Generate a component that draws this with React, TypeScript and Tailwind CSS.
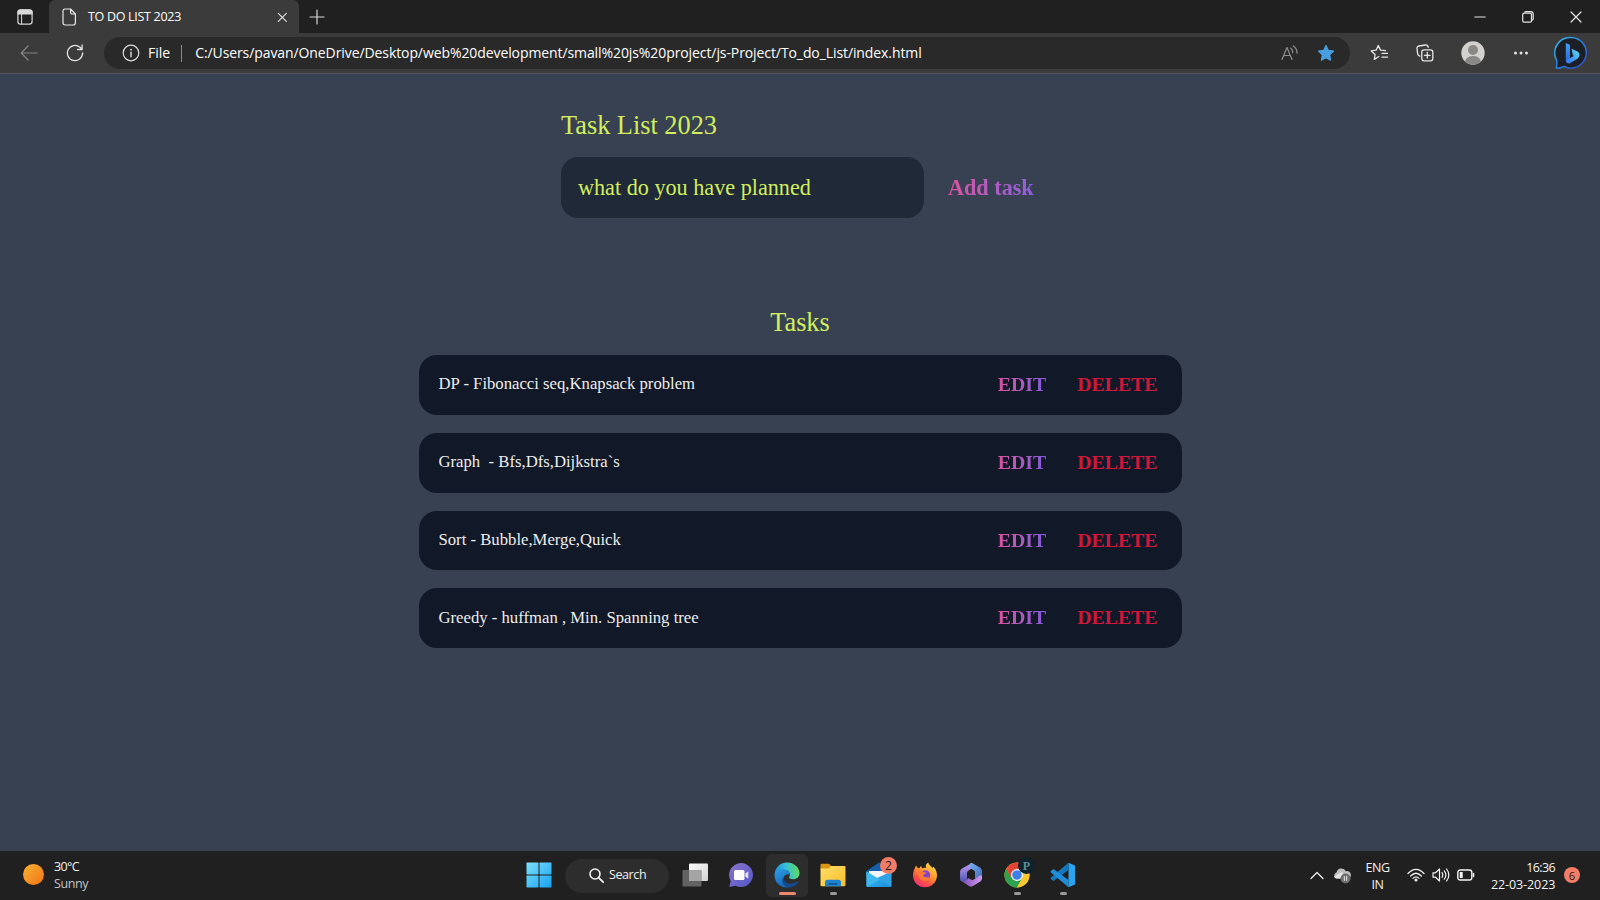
import React from "react";

const tasks = [
  "DP - Fibonacci seq,Knapsack problem",
  "Graph  - Bfs,Dfs,Dijkstra`s",
  "Sort - Bubble,Merge,Quick",
  "Greedy - huffman , Min. Spanning tree",
];

type IconProps = { className?: string; children: React.ReactNode; w: number; h: number };

function Icon({ className = "", children, w, h }: IconProps) {
  return (
    <svg
      width={w}
      height={h}
      viewBox={`0 0 ${w} ${h}`}
      fill="none"
      stroke="currentColor"
      strokeWidth="1.2"
      strokeLinecap="round"
      strokeLinejoin="round"
      className={`shrink-0 ${className}`}
    >
      {children}
    </svg>
  );
}

function TabStrip() {
  return (
    <div className="flex h-[33px] shrink-0 bg-[#202020]">
      <div className="flex w-[49px] shrink-0 items-center pl-[17px]">
        <Icon w={16} h={16} className="text-[#d8d8d8]">
          <rect x="0.9" y="0.9" width="14.2" height="14.2" rx="2.6" />
          <path d="M1 5V3.4Q1 1 3.4 1h9.2Q15 1 15 3.4V5z" fill="currentColor" />
          <path d="M4.6 5v10" strokeWidth="1" />
        </Icon>
      </div>
      <div className="flex w-[250px] shrink-0 items-center rounded-t-[6px] bg-[#3b3b3b] pl-[13px] pr-[10px] text-white">
        <Icon w={15} h={18} className="text-[#e8e8e8]">
          <path d="M3 1h5.600L13.400 6v8.800q0 2.200-2.200 2.200H3.200Q1 17 1 14.800V3.200Q1 1 3 1zM8.600 1v3.400q0 1.600 1.600 1.600h3.200" />
        </Icon>
        <span className="mt-px ml-[11px] grow text-[12.5px] leading-none tracking-[-0.3px]">TO DO LIST 2023</span>
        <Icon w={11} h={11} className="mr-px mt-px text-[#dedede]">
          <path d="M1.300 1.300l8 8M9.300 1.300l-8 8" />
        </Icon>
      </div>
      <div className="flex grow items-center pl-[10px] text-[#d8d8d8]">
        <Icon w={16} h={16}>
          <path d="M8 1v14M1 8h14" />
        </Icon>
      </div>
      <div className="flex items-center pr-[18px] text-[#e4e4e4]">
        <Icon w={12} h={12}>
          <path d="M0.800 6h10.400" strokeWidth="1.100" />
        </Icon>
        <Icon w={12} h={12} className="ml-[36px]">
          <rect x="0.700" y="2.200" width="8.800" height="9" rx="1.500" />
          <path d="M2.800 1q.4-.4 1-.4h5q2.400 0 2.400 2.400v4.700q0 .8-.6 1.300" />
        </Icon>
        <Icon w={12} h={12} className="ml-[36px]">
          <path d="M1 1l10 10M11 1L1 11" />
        </Icon>
      </div>
    </div>
  );
}

function BingLogo() {
  return (
    <Icon w={34} h={34}>
      <defs>
        <linearGradient id="bingRing" x1="0" y1="0" x2="1" y2="1">
          <stop offset="0" stopColor="#35c3e8" />
          <stop offset="0.5" stopColor="#2b7be0" />
          <stop offset="1" stopColor="#2a4cc0" />
        </linearGradient>
        <linearGradient id="bingStem" x1="0" y1="0" x2="0" y2="1">
          <stop offset="0" stopColor="#3fa2f4" />
          <stop offset="1" stopColor="#2467e4" />
        </linearGradient>
        <linearGradient id="bingBowl" x1="0" y1="1" x2="1" y2="0">
          <stop offset="0" stopColor="#2f6ff0" />
          <stop offset="1" stopColor="#5cdcf2" />
        </linearGradient>
      </defs>
      <path d="M17 1.500a15.300 15.300 0 1 1-6.800 29q-4 1.800-8 1.800 1-3.500.4-8.300A15.300 15.300 0 0 1 17 1.500z" fill="#1c2026" stroke="url(#bingRing)" strokeWidth="1.500" />
      <path d="M11.800 7l4.200 1.700v14l-4.200 2.600z" fill="url(#bingStem)" stroke="none" />
      <path d="M17.500 12.800l6 2.700q2.200 1.200 2 3.600-.2 2.300-2 3.600L16.300 27q-1.800 1-3.300.1-1.200-.9-1.200-2.500l8-4.600-1-.9z" fill="url(#bingBowl)" stroke="none" />
    </Icon>
  );
}

function Toolbar() {
  return (
    <div className="flex h-[41px] shrink-0 items-center border-b border-[#55595f] bg-[#3b3b3b] pl-[20px] pr-[12px] text-[#e4e4e4]">
      <Icon w={18} h={16} className="text-[#848484]">
        <path d="M17 8H1.300M8 1L1.200 8 8 15" />
      </Icon>
      <Icon w={18} h={18} className="ml-[28px]">
        <path d="M16.600 9A7.600 7.600 0 1 1 14 3.300L15.600 4.800M16.100 1v4.500h-4.600" strokeWidth="1.300" />
      </Icon>
      <div className="ml-[20px] flex h-[32px] w-[1246px] shrink-0 items-center rounded-full bg-[#292929] pl-[18px] pr-[15px] text-white">
        <Icon w={18} h={18} className="text-[#dcdcdc]">
          <circle cx="9" cy="9" r="7.800" />
          <path d="M9 8.300v4.400" strokeWidth="1.400" />
          <circle cx="9" cy="5.700" r="0.900" fill="currentColor" stroke="none" />
        </Icon>
        <span className="ml-[8px] text-[14px] leading-none">File</span>
        <span className="ml-[11px] h-[17px] w-px bg-[#8a8a8a]" />
        <span className="ml-[13px] grow whitespace-nowrap text-[14px] leading-none tracking-[-0.09px]">
          C:/Users/pavan/OneDrive/Desktop/web%20development/small%20js%20project/js-Project/To_do_List/index.html
        </span>
        <Icon w={18} h={16} className="text-[#8f8f8f]">
          <path d="M1 14.500L6 2.500l5 12M2.800 10.500h6.400M9.800 3.200q2 1.400 2 4.600M12.300 1q3.800 2.500 3.700 7.200" />
        </Icon>
        <Icon w={18} h={18} className="ml-[18px] text-[#479fe0]">
          <path d="M9 1.500l2.300 4.800 5.200.8-3.800 3.700.9 5.300L9 13.600l-4.600 2.500.9-5.300L1.500 7.100l5.200-.8z" fill="currentColor" />
        </Icon>
      </div>
      <Icon w={19} h={18} className="ml-[20px]">
        <path d="M8.800 12.500L4.300 15.400l.8-4.900L1.200 6.900l5-.8L8.300 1.500l2.200 4.600 5 .5M12 9.400h5.500M12 13.200h5.500" strokeWidth="1.300" />
      </Icon>
      <Icon w={18} h={18} className="ml-[27px]">
        <rect x="5.800" y="5.800" width="11" height="11" rx="2.200" strokeWidth="1.300" />
        <path d="M11.300 8.500v5.600M8.500 11.300h5.600M3.800 12.200Q2 11.500 1.600 9.600L1 4.500Q.8 2.400 2.800 2L9.500 1q2.200-.3 2.700 2.300" strokeWidth="1.300" />
      </Icon>
      <Icon w={24} h={24} className="ml-[27px]">
        <circle cx="12" cy="12" r="11.700" fill="#d3d1ce" stroke="none" />
        <circle cx="12" cy="9" r="5" fill="#8b8785" stroke="none" />
        <path d="M4 20.500q1.500-5.500 8-5.500t8 5.500A11.700 11.700 0 0 1 4 20.500z" fill="#8b8785" stroke="none" />
      </Icon>
      <Icon w={16} h={6} className="ml-[28px]">
        <g fill="currentColor" stroke="none">
          <circle cx="2.500" cy="3" r="1.500" />
          <circle cx="8" cy="3" r="1.500" />
          <circle cx="13.500" cy="3" r="1.500" />
        </g>
      </Icon>
      <span className="grow" />
      <BingLogo />
    </div>
  );
}

function TaskPage() {
  return (
    <main className="flex grow flex-col items-center bg-[#384151] font-['Liberation_Serif',serif]">
      <header className="mt-[37px] w-[478px]">
        <h1 className="text-[26.3px] leading-[30px] text-[#d2ee5c]">Task List 2023</h1>
        <form className="mt-[16px] flex h-[61px] items-center">
          <div className="flex h-full w-[363px] items-center rounded-[17px] bg-[#1f2937] pl-[17px] text-[22.2px] text-[#d2ee5c]">
            what do you have planned
          </div>
          <button
            type="button"
            className="ml-[24px] bg-linear-to-r from-[#dc509f] to-[#8b5fe0] bg-clip-text text-[22.2px] font-bold whitespace-nowrap text-transparent"
          >
            Add task
          </button>
        </form>
      </header>
      <section className="mt-[90px] w-[763px]">
        <h2 className="text-center text-[26.3px] leading-[30px] text-[#d2ee5c]">Tasks</h2>
        <ul className="mt-[17px] flex flex-col gap-[18px]">
          {tasks.map((task) => (
            <li key={task} className="flex h-[59.8px] items-center rounded-[18px] bg-[#111827] pr-[24px] pl-[20px]">
              <span className="mb-[2px] grow text-[16.7px] whitespace-pre text-[#ededed]">{task}</span>
              <button
                type="button"
                className="bg-linear-to-r from-[#d9509f] to-[#8159dc] bg-clip-text text-[19.8px] font-bold text-transparent"
              >
                EDIT
              </button>
              <button type="button" className="ml-[31px] text-[19.8px] font-bold text-[#cf173c]">
                DELETE
              </button>
            </li>
          ))}
        </ul>
      </section>
    </main>
  );
}

function AppSlot({ children, mark = "none" }: { children: React.ReactNode; mark?: "none" | "open" | "active" }) {
  return (
    <div
      className={`relative flex h-[43px] w-[42px] shrink-0 items-center justify-center rounded-[5px] pb-[2px] ${
        mark === "active" ? "bg-[#2d2d2d]" : ""
      }`}
    >
      {children}
      {mark === "open" && <span className="absolute bottom-[2px] h-[3px] w-[7px] rounded-full bg-[#9a9a9a]" />}
      {mark === "active" && <span className="absolute bottom-[2px] h-[3px] w-[17px] rounded-full bg-[#ee8770]" />}
    </div>
  );
}

function WindowsLogo() {
  return (
    <Icon w={26} h={26}>
      <defs>
        <linearGradient id="win" x1="0" y1="0" x2="26" y2="26" gradientUnits="userSpaceOnUse">
          <stop offset="0" stopColor="#7fe3fb" />
          <stop offset="1" stopColor="#159ff0" />
        </linearGradient>
      </defs>
      <g fill="url(#win)" stroke="none">
        <rect x="0.500" y="0.500" width="12" height="12" rx="0.800" />
        <rect x="13.500" y="0.500" width="12" height="12" rx="0.800" />
        <rect x="0.500" y="13.500" width="12" height="12" rx="0.800" />
        <rect x="13.500" y="13.500" width="12" height="12" rx="0.800" />
      </g>
    </Icon>
  );
}

function TaskViewIcon() {
  return (
    <Icon w={26} h={24}>
      <defs>
        <linearGradient id="tv" x1="0" y1="0" x2="1" y2="1">
          <stop offset="0" stopColor="#ffffff" />
          <stop offset="1" stopColor="#cfcfcf" />
        </linearGradient>
      </defs>
      <rect x="7" y="0.500" width="19" height="17.500" rx="1" fill="url(#tv)" stroke="none" />
      <rect x="0.500" y="7" width="19" height="16.500" rx="1" fill="#6e6e6e" fillOpacity="0.850" stroke="none" />
      <rect x="7" y="7" width="12.500" height="11" fill="#a4a4a4" stroke="none" />
    </Icon>
  );
}

function ChatIcon() {
  return (
    <Icon w={26} h={26}>
      <defs>
        <linearGradient id="chat" x1="0" y1="0" x2="1" y2="1">
          <stop offset="0" stopColor="#8e74c8" />
          <stop offset="1" stopColor="#5058c8" />
        </linearGradient>
      </defs>
      <path d="M13 1a12 12 0 1 1-5.500 22.700L1.300 25l1.400-6A12 12 0 0 1 13 1z" fill="url(#chat)" stroke="none" />
      <rect x="6" y="8" width="10.500" height="10" rx="1.600" fill="#fff" stroke="none" />
      <path d="M17.300 11.500l3-2.300v7.600l-3-2.300z" fill="#e4e2fa" stroke="none" />
    </Icon>
  );
}

function EdgeIcon() {
  return (
    <Icon w={26} h={26}>
      <defs>
        <linearGradient id="edgeTop" x1="0" y1="0.500" x2="1" y2="0.400">
          <stop offset="0" stopColor="#2089d8" />
          <stop offset="0.450" stopColor="#32bedd" />
          <stop offset="1" stopColor="#62dc5c" />
        </linearGradient>
        <linearGradient id="edgeLeft" x1="0" y1="0" x2="0.600" y2="1">
          <stop offset="0" stopColor="#2b9fe6" />
          <stop offset="1" stopColor="#1663b4" />
        </linearGradient>
      </defs>
      <g stroke="none">
        <path d="M.5 13C.5 6 6 .5 13 .5S25.500 5.500 25.500 11.300c0 3.800-3 6-6.300 6-3.200 0-4.700-1.200-3.900-2.500 2.200-3-.5-6.500-4.500-6.500C5.500 8.300.5 13 .5 13z" fill="url(#edgeTop)" />
        <path d="M.5 12.500C2 8.500 6.500 6.800 10.300 7.500c3.400.6 5.700 3.200 5.500 5.600-1-1.500-5-1.300-6 2.100-1.300 4.600 3.500 9 8.700 8.500C11 28 .5 24 .5 12.500z" fill="url(#edgeLeft)" />
        <path d="M10 14.500c-1.500 5 4.500 8.300 9 6.800 2.400-.7 4-1.600 4.700-1.800.7 0 .7.500.4 1-2.300 3.200-6 5-10 5-5.600-1.600-7.600-7.500-4.100-11z" fill="#124b90" />
      </g>
    </Icon>
  );
}

function ExplorerIcon() {
  return (
    <Icon w={26} h={24}>
      <defs>
        <linearGradient id="folder" x1="0" y1="0" x2="1" y2="1">
          <stop offset="0" stopColor="#ffdf6a" />
          <stop offset="1" stopColor="#f7bd28" />
        </linearGradient>
      </defs>
      <g stroke="none">
        <path d="M.5 2q0-1.300 1.300-1.300h6.500q1 0 1.600.8L11.800 4 9 6.500H.5z" fill="#d99412" />
        <path d="M.5 5.500h8L11 3h13.500q1 0 1 1v18q0 1.300-1.300 1.300H1.800Q.5 23.300.5 22z" fill="url(#folder)" />
        <path d="M5 23.300v-4q0-2.500 2.500-2.500h11q2.500 0 2.500 2.500v4z" fill="#1d83cf" />
        <rect x="8.500" y="20" width="9" height="1.700" rx="0.800" fill="#0d5b9e" />
      </g>
    </Icon>
  );
}

function MailIcon() {
  return (
    <Icon w={26} h={26}>
      <defs>
        <linearGradient id="mail" x1="0" y1="0" x2="1" y2="1">
          <stop offset="0" stopColor="#44c3f4" />
          <stop offset="1" stopColor="#178bd8" />
        </linearGradient>
      </defs>
      <g stroke="none">
        <path d="M.5 9L13 .5 25.500 9v5H.5z" fill="#155fa8" />
        <path d="M3 9h20v5l-10 5.500L3 14z" fill="#f2f6fa" />
        <path d="M25.500 9.500v14q0 1.500-1.500 1.500H1l10-9z" fill="#2fa3e6" />
        <path d="M.5 9.500l25 15.500H2Q.5 25 .5 23.500z" fill="url(#mail)" />
        <path d="M.5 9.500v14q0 .8.500 1.200L13.800 17.700z" fill="#3db8f0" />
      </g>
    </Icon>
  );
}

function FirefoxIcon() {
  return (
    <Icon w={26} h={26}>
      <defs>
        <linearGradient id="fox" x1="0.850" y1="0" x2="0.250" y2="1">
          <stop offset="0" stopColor="#ffe44c" />
          <stop offset="0.450" stopColor="#ff9630" />
          <stop offset="0.750" stopColor="#ff4b48" />
          <stop offset="1" stopColor="#e5317d" />
        </linearGradient>
      </defs>
      <g stroke="none">
        <path d="M2.700 6.500l1.300-3 2 2.700 1.500-.2L9 3.800l1 2.500c1.700-.7 3.300-.7 4.300-.2C13 3.500 14.500 1.500 16.300.5c.2 2.500 3 3.500 4.500 6l.2-2c3 2.500 4.200 6 4 9.500-.5 6.500-5.500 11.300-12 11.300S1 20.300 1 13.500c0-2.700.7-5 1.700-7z" fill="url(#fox)" />
        <circle cx="13.500" cy="13" r="4.700" fill="#8243c4" />
        <path d="M5.500 9.800c2-1.800 5-1.300 6.300.4l2.700.5c-.3 1.500-2.700 1.300-3.200 2.300-.3 1.300 1 2.500 2.600 2.300 2-.2 3.600 0 3.100 1-2 3.700-7.500 3.500-9.500 0-1.200-2.500-2.500-4.500-2-6.500z" fill="#ff7a35" />
      </g>
    </Icon>
  );
}

function OfficeIcon() {
  return (
    <Icon w={24} h={26}>
      <defs>
        <linearGradient id="offA" x1="0" y1="0" x2="0" y2="1">
          <stop offset="0" stopColor="#c99af0" />
          <stop offset="1" stopColor="#4a56b4" />
        </linearGradient>
        <linearGradient id="offB" x1="0" y1="0" x2="1" y2="1">
          <stop offset="0" stopColor="#78b2f0" />
          <stop offset="1" stopColor="#4268bd" />
        </linearGradient>
        <linearGradient id="offC" x1="0" y1="0" x2="1" y2="0">
          <stop offset="0" stopColor="#7d4bb8" />
          <stop offset="1" stopColor="#d39af0" />
        </linearGradient>
      </defs>
      <g stroke="none">
        <path d="M13 1L3 6.500Q1 7.800 1 10v6.500q0 2.500 2 3l3 .5q2-.6 2-3v-6q0-1.500 1.300-2.300L15 5z" fill="url(#offA)" />
        <path d="M11 1.500q1.500-.8 3 0l7 4q2 1.200 2 3.500v8l-7-.5V10q0-1-1-1.600L10 5.500z" fill="url(#offB)" />
        <path d="M3 19.500q3 .5 5-2l1-1.500 4.500 2.200L21 13.500q2-1.200 2 1.500v1.500q0 2-2 3.200l-7 4.300q-2 1-4 0z" fill="url(#offC)" />
      </g>
    </Icon>
  );
}

function ChromeIcon() {
  return (
    <Icon w={26} h={26}>
      <g stroke="none">
        <circle cx="13" cy="13" r="12.500" fill="#f9c72f" />
        <path d="M2.200 6.700A12.500 12.500 0 0 1 23.800 6.700L13 7z" fill="#e44236" />
        <path d="M2.200 6.700A12.500 12.500 0 0 0 13 25.500l5.300-9.500L13 13 7 15z" fill="#2ea14e" />
        <path d="M2.200 6.700L7.500 16 13 13l11-6z" fill="#e44236" />
        <path d="M13 7h11a12.500 12.500 0 0 1-11 18.500l5.300-9.500z" fill="#f9c72f" />
        <circle cx="13" cy="13" r="6" fill="#fff" />
        <circle cx="13" cy="13" r="4.800" fill="#3c80e8" />
      </g>
    </Icon>
  );
}

function CodeIcon() {
  return (
    <Icon w={26} h={26}>
      <g stroke="none">
        <path d="M18.500.7L25 3.500v19l-6.500 2.800z" fill="#2ba4ee" />
        <path d="M18.500.7V8L3.500 19 .7 17v-1.300z" fill="#1478bd" />
        <path d="M18.500 25.300V18L3.500 7 .7 9v1.300z" fill="#1f8dd8" />
      </g>
    </Icon>
  );
}

function Taskbar() {
  return (
    <footer className="flex h-[49px] shrink-0 items-center bg-[#202020] text-[12.5px] text-[#f2f2f2]">
      <div className="flex w-[517.5px] shrink-0 items-center pl-[22.5px]">
        <span className="mb-[3px] size-[21px] rounded-full bg-linear-to-br from-[#f6b234] to-[#f07312]" />
        <div className="mb-px ml-[10.5px] leading-[17px]">
          <p className="tracking-[-0.6px]">30°C</p>
          <p className="tracking-[-0.4px] text-[#c4c4c4]">Sunny</p>
        </div>
      </div>
      <div className="flex items-center gap-[4px]">
        <AppSlot>
          <WindowsLogo />
        </AppSlot>
        <div className="mr-px ml-[1.5px] flex h-[34px] w-[104px] shrink-0 items-center rounded-full bg-[#2d2d2d] pl-[23px]">
          <Icon w={17} h={17}>
            <circle cx="7" cy="7" r="5" strokeWidth="1.600" />
            <path d="M10.800 10.800l4.400 4.400" strokeWidth="1.800" />
          </Icon>
          <span className="ml-[4px] tracking-[-0.4px]">Search</span>
        </div>
        <div className="flex gap-[4px]">
          <AppSlot>
            <TaskViewIcon />
          </AppSlot>
          <AppSlot>
            <ChatIcon />
          </AppSlot>
          <AppSlot mark="active">
            <EdgeIcon />
          </AppSlot>
          <AppSlot mark="open">
            <ExplorerIcon />
          </AppSlot>
          <AppSlot>
            <MailIcon />
            <span className="absolute top-[3px] right-[3px] flex size-[17px] items-center justify-center rounded-full bg-[#f07d68] text-[12px] leading-none text-[#2a1a18]">
              2
            </span>
          </AppSlot>
          <AppSlot>
            <FirefoxIcon />
          </AppSlot>
          <AppSlot>
            <OfficeIcon />
          </AppSlot>
          <AppSlot mark="open">
            <ChromeIcon />
            <span className="absolute top-[3px] right-[3px] flex size-[17px] items-center justify-center rounded-full bg-[#10222b] font-['Liberation_Serif',serif] text-[12px] leading-none font-bold text-[#5f8f98]">
              P
            </span>
          </AppSlot>
          <AppSlot mark="open">
            <CodeIcon />
          </AppSlot>
        </div>
      </div>
      <div className="ml-auto flex items-center pr-[20px]">
        <Icon w={14} h={9} className="mb-px">
          <path d="M1 7.500l6-6 6 6" />
        </Icon>
        <Icon w={18} h={17} className="ml-[8.5px]">
          <g stroke="none">
            <path d="M3.600 11.500a3.300 3.300 0 0 1 0-6.300 5 5 0 0 1 9.300-1 3.800 3.800 0 0 1 2.300 7.300z" fill="#bdbdbd" />
            <path d="M1 9.500L9 5l5 6.500H3.600Q1.500 11.500 1 9.500z" fill="#e6e6e6" />
            <circle cx="12.500" cy="11.500" r="5" fill="#6d6d6d" />
          </g>
          <path d="M11.300 9.500v4M13.700 9.500v4" strokeWidth="1" />
        </Icon>
        <div className="ml-[15px] w-[24px] text-center leading-[17px] tracking-[-0.4px]">
          <p>ENG</p>
          <p>IN</p>
        </div>
        <Icon w={18} h={14} className="mb-px ml-[17.5px]">
          <path d="M1 5.500q8-8.300 16 0M3.600 8q5.400-5.500 10.800 0M6 10.400q3-3 6 0" strokeWidth="1.300" />
          <circle cx="9" cy="12" r="1.500" fill="currentColor" stroke="none" />
        </Icon>
        <Icon w={18} h={16} className="mb-px ml-[7px]">
          <path d="M1 5.800h2.500L7.500 2v12l-4-3.800H1zM10 5.700q1.700 2.300 0 4.600M12.300 3.800q3.200 4.200 0 8.400M14.600 2q4.500 6 0 12" />
        </Icon>
        <Icon w={18} h={12} className="mb-px ml-[7px]">
          <rect x="0.800" y="1" width="14" height="10" rx="2.300" strokeWidth="1.400" />
          <rect x="2.700" y="3" width="3" height="6" rx="0.500" fill="currentColor" stroke="none" />
          <path d="M16.500 4.500v3" strokeWidth="1.600" />
        </Icon>
        <div className="ml-[16px] w-[65px] text-right leading-[17px]">
          <p className="pr-px tracking-[-0.6px]">16:36</p>
          <p className="pr-px tracking-[-0.1px] whitespace-nowrap">22-03-2023</p>
        </div>
        <span className="mb-px ml-[8px] flex size-[16px] items-center justify-center rounded-full bg-[#f37d66] text-[11px] leading-none text-[#2a1a18]">
          6
        </span>
      </div>
    </footer>
  );
}

export default function App() {
  return (
    <div className="flex h-[900px] w-[1600px] flex-col overflow-hidden font-['Open_Sans','Noto_Sans',sans-serif]">
      <TabStrip />
      <Toolbar />
      <TaskPage />
      <Taskbar />
    </div>
  );
}
